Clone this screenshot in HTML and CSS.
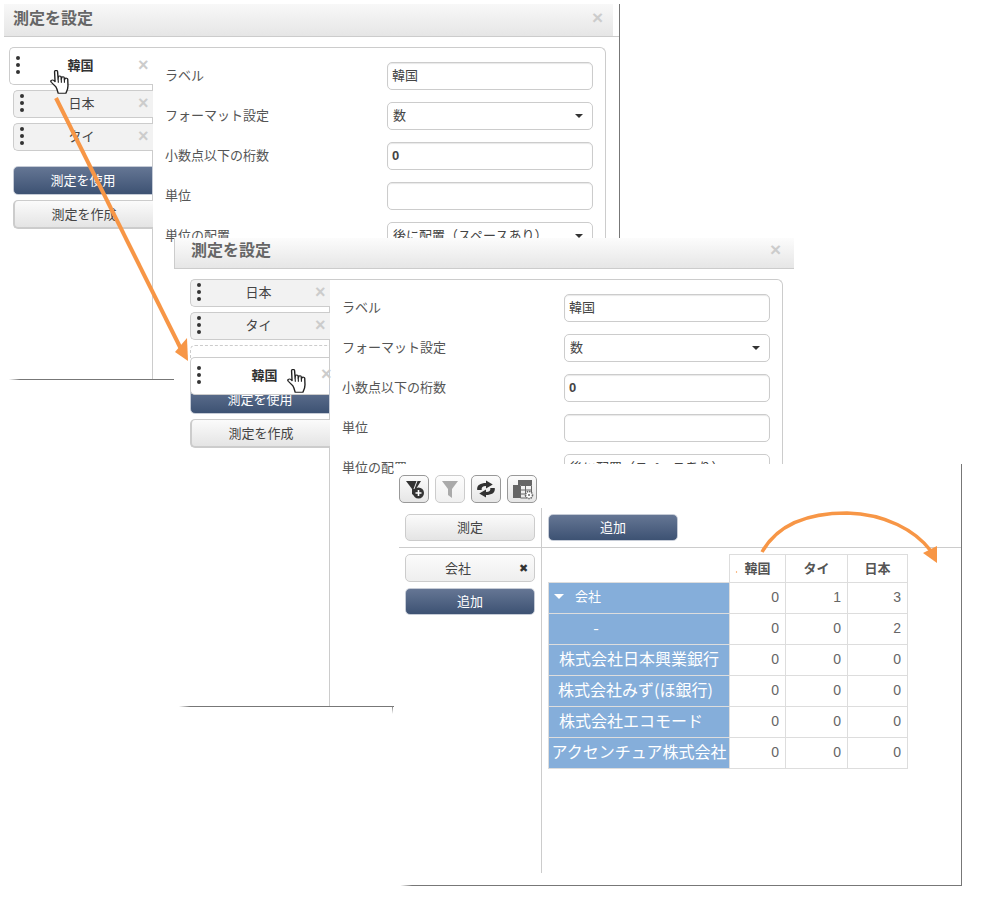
FILE: index.html
```html
<!DOCTYPE html>
<html lang="ja">
<head>
<meta charset="utf-8">
<title>測定を設定</title>
<link rel="stylesheet" href="styles.css">
</head>
<body>
<svg width="0" height="0" class="defs">
  <defs>
    <symbol id="hand" viewBox="1 0.7 15 25" preserveAspectRatio="none">
      <path d="M5.5 18 L2 13.5 C1 12 2.5 10.5 4 11.5 L5 12.8 L4.6 2.5 C4.6 0.6 7 0.6 7 2.5 L7.4 10 L7.6 8 C7.8 6.6 9.7 6.6 9.8 8.1 L9.9 10.5 L10.2 8.8 C10.5 7.4 12.2 7.5 12.3 9 L12.4 11 L12.8 9.9 C13.2 8.8 15 9 15 10.4 L15.2 17 C15.2 21 14 23 13.5 25 L7.5 25 C7 22.5 6.5 20 5.5 18 Z" fill="#fff" stroke="#222" stroke-width="1.1" stroke-linejoin="round"/>
      <path d="M7.4 10 L7.6 14 M9.9 10.5 L10 14 M12.4 11 L12.4 14" fill="none" stroke="#222" stroke-width="0.9"/>
    </symbol>
  </defs>
</svg>

<section class="win win-one">
  <header class="win-head"><h2 class="win-title">測定を設定</h2><span class="win-close">×</span></header>
  <div class="win-body">
    <aside class="side side-one">
      <div class="item item-active"><span class="dots"><i></i><i></i><i></i></span><span class="item-name strong">韓国</span><span class="item-x">×</span></div>
      <div class="item"><span class="dots"><i></i><i></i><i></i></span><span class="item-name">日本</span><span class="item-x">×</span></div>
      <div class="item"><span class="dots"><i></i><i></i><i></i></span><span class="item-name">タイ</span><span class="item-x">×</span></div>
      <button class="btn btn-dark btn-first">測定を使用</button>
      <button class="btn btn-light">測定を作成</button>
    </aside>
    <div class="panel">
      <div class="row"><span class="row-label">ラベル</span><div class="field">韓国</div></div>
      <div class="row"><span class="row-label">フォーマット設定</span><div class="field field-select">数<b class="caret"></b></div></div>
      <div class="row"><span class="row-label">小数点以下の桁数</span><div class="field field-num">0</div></div>
      <div class="row"><span class="row-label">単位</span><div class="field"></div></div>
      <div class="row"><span class="row-label">単位の配置</span><div class="field field-select">後に配置（スペースあり）<b class="caret"></b></div></div>
    </div>
  </div>
  <svg class="cursor cursor-one"><use href="#hand"/></svg>
</section>

<section class="win win-two">
  <header class="win-head"><h2 class="win-title">測定を設定</h2><span class="win-close">×</span></header>
  <div class="win-body">
    <aside class="side side-two">
      <div class="item"><span class="dots"><i></i><i></i><i></i></span><span class="item-name">日本</span><span class="item-x">×</span></div>
      <div class="item"><span class="dots"><i></i><i></i><i></i></span><span class="item-name">タイ</span><span class="item-x">×</span></div>
      <div class="slot"></div>
      <button class="btn btn-dark btn-under">測定を使用</button>
      <button class="btn btn-light">測定を作成</button>
      <div class="item item-drag"><span class="dots"><i></i><i></i><i></i></span><span class="item-name strong">韓国</span><span class="item-x">×</span></div>
    </aside>
    <div class="panel">
      <div class="row"><span class="row-label">ラベル</span><div class="field">韓国</div></div>
      <div class="row"><span class="row-label">フォーマット設定</span><div class="field field-select">数<b class="caret"></b></div></div>
      <div class="row"><span class="row-label">小数点以下の桁数</span><div class="field field-num">0</div></div>
      <div class="row"><span class="row-label">単位</span><div class="field"></div></div>
      <div class="row"><span class="row-label">単位の配置</span><div class="field field-select">後に配置（スペースあり）<b class="caret"></b></div></div>
    </div>
  </div>
  <svg class="cursor cursor-two"><use href="#hand"/></svg>
</section>

<section class="win-three">
  <div class="toolbar">
    <button class="tool">
      <svg viewBox="0 0 30 28" width="30" height="28"><path d="M7 6 H22 L17 14 V22 L13 19 V14 Z" fill="#333"/><path d="M18 6 L15 14" stroke="#eee" stroke-width="1"/><circle cx="19.5" cy="18" r="5.5" fill="#333"/><path d="M19.5 15 V21 M16.5 18 H22.5" stroke="#fff" stroke-width="1.6"/></svg>
    </button>
    <button class="tool tool-off">
      <svg viewBox="0 0 30 28" width="30" height="28"><path d="M7 6 H23 L17 14 V23 L13 20 V14 Z" fill="#aaa"/></svg>
    </button>
    <button class="tool">
      <svg viewBox="0 0 30 28" width="30" height="28"><g transform="translate(15 14) scale(1.35 1) translate(-15 -14)"><path d="M8.5 15 C8 10 11 8 15 8 L15 5.5 L20 9.5 L15 13.5 L15 11 C12.5 11 11.5 12.5 11.8 15 Z" fill="#333"/><path d="M21.5 13 C22 18 19 20 15 20 L15 22.5 L10 18.5 L15 14.5 L15 17 C17.5 17 18.5 15.5 18.2 13 Z" fill="#333"/></g></svg>
    </button>
    <button class="tool">
      <svg viewBox="0 0 30 28" width="30" height="28"><rect x="6" y="10" width="7" height="13" fill="#666"/><rect x="11" y="5" width="14" height="5" fill="#666"/><path d="M13.5 10.5 H24.5 V19 M13.5 10.5 V23 H19 M18.5 11 V22 M14 15 H24 M14 19 H19" fill="none" stroke="#666" stroke-width="1"/><circle cx="22" cy="20" r="3.5" fill="#fff" stroke="#666" stroke-width="1.6" stroke-dasharray="1.5 0.8"/><circle cx="22" cy="20" r="1" fill="#666"/></svg>
    </button>
  </div>
  <div class="pivot">
    <div class="pivot-top-left"><button class="btn btn-light btn-wide">測定</button></div>
    <div class="pivot-top-right"><button class="btn btn-dark btn-wide">追加</button></div>
    <div class="pivot-left">
      <div class="chip"><span class="chip-name">会社</span><span class="chip-x">✖</span></div>
      <button class="btn btn-dark btn-wide">追加</button>
    </div>
    <div class="pivot-right">
      <table class="grid">
        <thead>
          <tr><th class="corner"></th><th class="c1">韓国</th><th class="c2">タイ</th><th class="c3">日本</th></tr>
        </thead>
        <tbody>
          <tr><td class="name name-group"><b class="caret caret-white"></b>会社</td><td class="num">0</td><td class="num">1</td><td class="num">3</td></tr>
          <tr><td class="name name-dash">-</td><td class="num">0</td><td class="num">0</td><td class="num">2</td></tr>
          <tr><td class="name">株式会社日本興業銀行</td><td class="num">0</td><td class="num">0</td><td class="num">0</td></tr>
          <tr><td class="name name-near">株式会社みず(ほ銀行)</td><td class="num">0</td><td class="num">0</td><td class="num">0</td></tr>
          <tr><td class="name name-far">株式会社エコモード</td><td class="num">0</td><td class="num">0</td><td class="num">0</td></tr>
          <tr><td class="name">アクセンチュア株式会社</td><td class="num">0</td><td class="num">0</td><td class="num">0</td></tr>
        </tbody>
      </table>
    </div>
  </div>
</section>

<svg class="arrows" viewBox="0 0 987 909" width="987" height="909">
  <path d="M56 98 L181 349" fill="none" stroke="#f79646" stroke-width="4"/>
  <path d="M175 352 L188 361 L187 338 Z" fill="#f79646"/>
  <path d="M762 552 C780 520 815 513 847 513 C885 514 915 530 931 551" fill="none" stroke="#f79646" stroke-width="3.5"/>
  <path d="M923 553 L937 546 L937 563 Z" fill="#f79646"/>
  <circle cx="736.5" cy="572" r="0.7" fill="#f79646"/>
</svg>
</body>
</html>
```
FILE: styles.css
```css
* { box-sizing: border-box; }
html, body { margin: 0; padding: 0; }
body {
  position: relative;
  width: 987px;
  height: 909px;
  overflow: hidden;
  background: #fff;
  font-family: "Noto Sans CJK JP", "Liberation Sans", sans-serif;
  font-size: 13px;
  color: #555;
}
.defs { position: absolute; }

/* Screenshot windows placed on a free canvas */
.win { position: absolute; background: #fff; }
.win-one {
  left: 4px; top: 4px; width: 616px; height: 376px;
  border-right: 1px solid #777;
  border-bottom: 1px solid #777;
}
.win-two {
  left: 174px; top: 238px; width: 620px; height: 469px;
  border-bottom: 1px solid #777;
}
.win-one::after, .win-two::after {
  content: "";
  position: absolute;
  left: 0; bottom: -1px;
  width: 16px; height: 1px;
  background: linear-gradient(90deg, #fff 30%, #777);
}
.win-two::before {
  content: "";
  position: absolute;
  left: 218px; top: 468px;
  width: 1px; height: 8px;
  background: linear-gradient(#777, #fff);
}
.win-head {
  height: 33px;
  display: flex;
  align-items: center;
  justify-content: space-between;
  background: linear-gradient(#fcfcfc, #e6e6e6);
  border-bottom: 1px solid #ccc;
}
.win-one .win-head {
  padding: 0 16px 6px 9px;
  background: linear-gradient(#f8f8f8, #e6e6e6) no-repeat;
  background-size: calc(100% - 6px) 100%;
}
.win-two .win-head { height: 31px; padding: 0 13px 8px 16px; border-left: 1px solid #ccc; }
.win-title { margin: 0; font-size: 16px; font-weight: 700; color: #666; line-height: 20px; }
.win-close { font-family: "Liberation Sans", sans-serif; font-size: 19px; font-weight: 700; color: #ccc; line-height: 1; }

.win-body { display: flex; height: 342px; }
.win-one .win-body { padding: 10px 13px 0 5px; overflow: hidden; }
.win-two .win-body { padding: 10px 11px 0 16px; height: 437px; }

.side { display: flex; flex-direction: column; flex: none; position: relative; }
.side-one { width: 144px; }
.side-one .item, .side-one .btn { margin-left: 4px; }
.side-two { width: 140px; }

.item {
  height: 28px;
  margin-bottom: 5px;
  display: flex;
  align-items: center;
  background: #f2f2f2;
  border: 1px solid #ccc;
  border-right: 0;
  border-radius: 5px 0 0 5px;
  position: relative;
  color: #444;
}
.side-one .item-active {
  margin-left: 0;
  height: 38px;
  background: #fff;
}
.dots { display: flex; flex-direction: column; gap: 3px; width: 7px; margin-left: 6px; flex: none; margin-top: -3px; }
.dots i { display: block; width: 4px; height: 4px; border-radius: 50%; background: #333; }
.item-name { flex: 1; text-align: center; padding-right: 2px; margin-top: -4px; }
.strong { font-weight: 700; color: #333; }
.item-active .item-name { padding-right: 0; }
.item-x { font-family: "Liberation Sans", sans-serif; font-size: 18px; font-weight: 700; color: #ccc; width: 15px; flex: none; line-height: 1; margin-top: -3px; }
.slot {
  height: 13px;
  border: 1px dashed #ccc;
  border-bottom: 0;
  border-right: 0;
  border-radius: 5px 0 0 0;
}
.item-drag {
  position: absolute;
  left: 0; top: 78px;
  width: 139px;
  height: 38px;
  background: #fff;
  z-index: 2;
  margin: 0;
}
.item-drag .item-name { padding-right: 4px; }
.item-drag .item-x { position: absolute; right: -7px; top: 10px; }

.btn {
  display: block;
  width: 140px;
  height: 29px;
  padding: 0 0 2px;
  font: inherit;
  font-size: 13px;
  border-radius: 5px 0 0 5px;
  border: 1px solid #ccc;
  text-align: center;
}
.btn-dark {
  background: linear-gradient(#657694, #3d5273);
  color: #fff;
  border-color: #c5cbd6;
}
.btn-light {
  background: linear-gradient(#fbfbfb, #e4e4e4);
  color: #444;
  margin-top: 5px;
  border-width: 1px 0 2px 2px;
}
.btn-first { margin-top: 10px; }
.btn-under { margin-top: 27px; }

.panel {
  flex: 1;
  border: 1px solid #ccc;
  border-bottom: 0;
  border-radius: 0 6px 0 0;
  padding: 14px 12px 0 12px;
  margin-left: -1px;
  background: #fff;
}
.row { display: flex; align-items: center; justify-content: space-between; height: 28px; margin-bottom: 12px; }
.row-label { color: #555; white-space: nowrap; margin-top: -4px; }
.field {
  width: 206px;
  height: 28px;
  border: 1px solid #ccc;
  border-radius: 5px;
  padding: 0 4px;
  line-height: 24px;
  box-shadow: inset 0 1px 1px #e8e8e8;
  color: #444;
  position: relative;
  background: #fff;
  white-space: nowrap;
  overflow: hidden;
}
.field-select { box-shadow: none; padding-left: 5px; }
.field-num { font-family: "Liberation Sans", sans-serif; font-weight: 700; font-size: 13px; line-height: 26px; }
.caret {
  display: inline-block;
  width: 0; height: 0;
  border-left: 4px solid transparent;
  border-right: 4px solid transparent;
  border-top: 4px solid #333;
}
.field-select .caret { position: absolute; right: 9px; top: 11px; }

.cursor { position: absolute; width: 19px; height: 24px; z-index: 3; }
.cursor-one { left: 46px; top: 66px; }
.cursor-two { left: 113px; top: 131px; }

/* Third screenshot */
.win-three {
  position: absolute;
  left: 394px; top: 464px;
  width: 568px; height: 422px;
  background: #fff;
  border-right: 1px solid #777;
  border-bottom: 1px solid #777;
  padding: 11px 0 0 5px;
}
.win-three::after {
  content: "";
  position: absolute;
  left: 0; bottom: -1px;
  width: 18px; height: 1px;
  background: linear-gradient(90deg, #fff 35%, #777);
}
.toolbar { display: flex; gap: 6px; height: 28px; }
.tool {
  width: 30px; height: 28px;
  padding: 0;
  border: 1px solid #999;
  border-radius: 5px;
  background: linear-gradient(#fcfcfc, #e6e6e6);
  display: flex;
  align-items: center;
  justify-content: center;
}
.tool svg { flex: none; }
.tool-off { border-color: #ccc; background: linear-gradient(#fdfdfd, #f0f0f0); }

.pivot {
  display: grid;
  grid-template-columns: 143px 1fr;
  grid-template-rows: 40px 1fr;
  margin-top: 5px;
  height: 365px;
}
.pivot-top-left { padding: 6px 0 0 6px; border-bottom: 1px solid #ccc; border-right: 1px solid #ccc; }
.pivot-top-right { padding: 6px 0 0 6px; border-bottom: 1px solid #ccc; }
.pivot-left { padding: 6px 0 0 6px; border-right: 1px solid #ccc; }
.pivot-right { padding: 6px 0 0 6px; }
.btn-wide { width: 130px; height: 27px; border-radius: 5px; margin: 0; border-width: 1px; }
.chip {
  width: 130px; height: 28px;
  border: 1px solid #ccc;
  border-radius: 5px;
  background: linear-gradient(#fbfbfb, #eee);
  display: flex;
  align-items: center;
  color: #444;
  margin-bottom: 6px;
}
.chip-name { flex: 1; text-align: center; padding-left: 0; margin-top: -2px; }
.chip-x { width: 24px; font-family: "DejaVu Sans", sans-serif; font-size: 11px; color: #333; flex: none; padding-left: 9px; }

.grid { border-collapse: collapse; table-layout: fixed; width: 359px; }
.grid th, .grid td { border: 1px solid #ddd; padding: 0; }
.grid th { height: 28px; font-size: 13px; font-weight: 700; color: #555; text-align: center; padding-bottom: 2px; }
.grid tbody tr { height: 31px; }
.corner { width: 181px; border-top-color: #fff !important; border-left-color: #fff !important; background: #fff; }
.c1 { width: 56px; }
.c2 { width: 62px; }
.c3 { width: 60px; }
.grid td.name {
  background: #85aeda;
  color: #fff;
  font-size: 16px;
  line-height: 20px;
  text-align: center;
  white-space: nowrap;
  overflow: hidden;
  padding-bottom: 5px;
}
.grid td.name-group { text-align: left; font-size: 13px; padding-left: 5px; }
.grid td.name-dash { padding-right: 86px; }
.grid td.name-near { padding-right: 7px; }
.grid td.name-far { padding-right: 16px; }
.caret-white { border-top: 5px solid #fff; border-left-width: 5px; border-right-width: 5px; margin-right: 11px; vertical-align: 2px; }
.grid td.num { font-family: "Liberation Sans", sans-serif; font-size: 14px; color: #666; text-align: right; padding: 0 6px 2px 0; }

.arrows { position: absolute; left: 0; top: 0; z-index: 5; pointer-events: none; }
```
